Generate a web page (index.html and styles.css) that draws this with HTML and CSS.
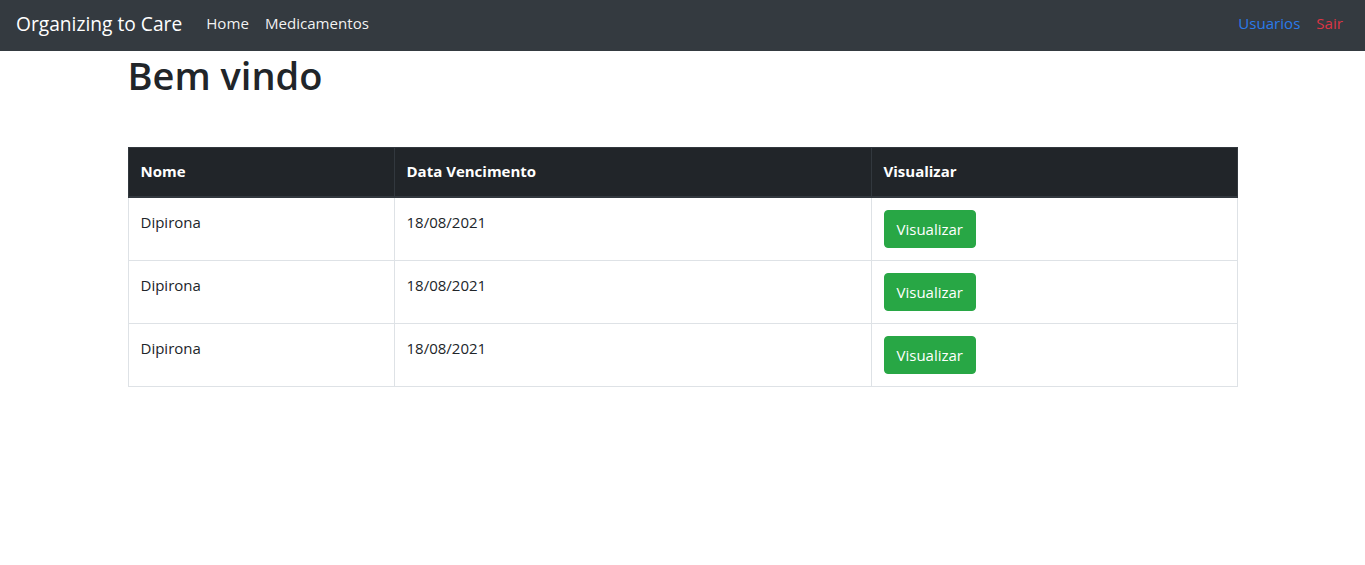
FILE: index.html
```html
<!DOCTYPE html>
<html lang="pt">
<head>
<meta charset="utf-8">
<title>Organizing to Care</title>
<link rel="stylesheet" href="styles.css">
</head>
<body>
<nav class="navbar">
  <a class="brand" href="#">Organizing to Care</a>
  <ul class="nav">
    <li><a class="nav-link" href="#">Home</a></li>
    <li><a class="nav-link" href="#">Medicamentos</a></li>
  </ul>
  <ul class="nav nav-right">
    <li><a class="nav-link link-blue" href="#">Usuarios</a></li>
    <li><a class="nav-link link-red" href="#">Sair</a></li>
  </ul>
</nav>
<main class="container">
  <h1 class="title">Bem vindo</h1>
  <table class="table">
    <thead>
      <tr>
        <th class="col-nome">Nome</th>
        <th class="col-data">Data Vencimento</th>
        <th class="col-vis">Visualizar</th>
      </tr>
    </thead>
    <tbody>
      <tr>
        <td class="cell-text">Dipirona</td>
        <td class="cell-text">18/08/2021</td>
        <td><button class="btn">Visualizar</button></td>
      </tr>
      <tr>
        <td class="cell-text">Dipirona</td>
        <td class="cell-text">18/08/2021</td>
        <td><button class="btn">Visualizar</button></td>
      </tr>
      <tr>
        <td class="cell-text">Dipirona</td>
        <td class="cell-text">18/08/2021</td>
        <td><button class="btn">Visualizar</button></td>
      </tr>
    </tbody>
  </table>
</main>
</body>
</html>
```

FILE: styles.css
```css
* { box-sizing: border-box; }
body {
  margin: 0;
  font-family: "Open Sans", "Noto Sans", sans-serif;
  font-size: 15px;
  line-height: 1.5;
  color: #212529;
  background: #fff;
}
a { text-decoration: none; }
.navbar {
  display: flex;
  align-items: center;
  height: 51px;
  padding: 0 16px 4px 16px;
  background: #343a40;
}
.brand {
  color: #fff;
  font-size: 19.2px;
  margin-right: 16px;
  line-height: 30px;
}
.nav {
  display: flex;
  list-style: none;
  margin: 0;
  padding: 0;
}
.nav-right { margin-left: auto; margin-right: -2px; }
.nav-link {
  display: block;
  padding: 8px 8px;
  color: rgba(255,255,255,0.95);
  font-size: 15.1px;
}
.link-blue { color: #2a7bea; }
.link-red { color: #dc3545; }
.container {
  width: 1110px;
  margin: 0 auto;
}
.title {
  margin: 0 0 48px 0;
  font-size: 38px;
  font-weight: 600;
  line-height: 48px;
}
.table {
  width: 100%;
  border-collapse: collapse;
}
.table th, .table td {
  border: 1px solid #dee2e6;
  padding: 12px;
  text-align: left;
  vertical-align: top;
}
.table thead th {
  background: #212529;
  color: #fff;
  border-color: #32383e;
  border-bottom-width: 2px;
  font-weight: 700;
  font-size: 15px;
  padding-bottom: 13px;
}
.table td.cell-text {
  padding-top: 13px;
  padding-bottom: 11px;
}
.col-nome { width: 266px; }
.col-data { width: 477px; }
.btn {
  font-family: inherit;
  font-size: 15px;
  line-height: 24px;
  padding: 6px 12px;
  color: #fff;
  background: #28a745;
  border: 1px solid #28a745;
  border-radius: 4px;
  cursor: pointer;
}
```
